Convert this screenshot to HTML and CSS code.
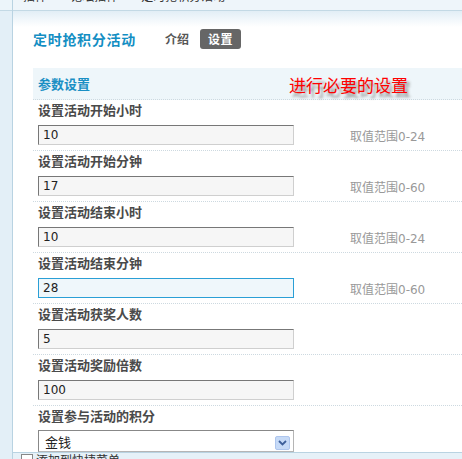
FILE: index.html
```html
<!DOCTYPE html>
<html lang="zh">
<head>
<meta charset="utf-8">
<title>定时抢积分活动 - 设置</title>
<link rel="stylesheet" href="styles.css">
</head>
<body>
<div class="frame">
  <div class="side">
    <div class="side-top"></div>
  </div>
  <div class="right">
    <div class="topbar">
      <div class="crumbs">插件 <span class="sep">»</span> 论坛插件 <span class="sep">»</span> 定时抢积分活动</div>
    </div>
    <div class="panel">
      <div class="title-row">
        <h1 class="title">定时抢积分活动</h1>
        <span class="tab">介绍</span>
        <span class="tab tab-active">设置</span>
      </div>
      <div class="section-head">参数设置</div>
      <div class="note">进行必要的设置</div>

      <div class="row">
        <div class="label">设置活动开始小时</div>
        <div class="field"><input class="input" type="text" value="10"><span class="hint">取值范围0-24</span></div>
      </div>
      <div class="row">
        <div class="label">设置活动开始分钟</div>
        <div class="field"><input class="input" type="text" value="17"><span class="hint">取值范围0-60</span></div>
      </div>
      <div class="row">
        <div class="label">设置活动结束小时</div>
        <div class="field"><input class="input" type="text" value="10"><span class="hint">取值范围0-24</span></div>
      </div>
      <div class="row">
        <div class="label">设置活动结束分钟</div>
        <div class="field"><input class="input input-focus" type="text" value="28"><span class="hint">取值范围0-60</span></div>
      </div>
      <div class="row">
        <div class="label">设置活动获奖人数</div>
        <div class="field"><input class="input" type="text" value="5"></div>
      </div>
      <div class="row">
        <div class="label">设置活动奖励倍数</div>
        <div class="field"><input class="input" type="text" value="100"></div>
      </div>
      <div class="row">
        <div class="label">设置参与活动的积分</div>
        <div class="field">
          <div class="select">
            <span class="select-text">金钱</span>
            <span class="select-btn"><svg width="9" height="6" viewBox="0 0 9 6"><path d="M1 1 L4.5 4.5 L8 1" fill="none" stroke="#3d5f9a" stroke-width="1.8"/></svg></span>
          </div>
        </div>
      </div>
    </div>
    <div class="bottom">
      <span class="check"></span><span class="bottom-text">添加到快捷菜单</span>
    </div>
  </div>
</div>
</body>
</html>
```

FILE: styles.css
```css
html, body {
  margin: 0;
  padding: 0;
}
body {
  width: 462px;
  height: 459px;
  overflow: hidden;
  background: #e6f1f8;
  font-family: "Noto Sans CJK SC", "DejaVu Sans", sans-serif;
  font-size: 12px;
  color: #333;
}
.frame {
  display: flex;
  height: 459px;
}
.side {
  width: 12px;
  flex: none;
  border-right: 1px solid #b9d3e2;
  background: #e3eff7;
}
.side-top {
  height: 10px;
  border-bottom: 1px solid #c3d9e5;
  background: #ecf5fa;
}
.right {
  flex: 1;
  display: flex;
  flex-direction: column;
  min-width: 0;
}
.topbar {
  height: 10px;
  flex: none;
  background: #eef5fa;
  border-bottom: 1px solid #c3d9e5;
  overflow: hidden;
  padding-left: 10px;
}
.crumbs {
  margin-top: -11px;
  line-height: 14px;
  font-size: 12px;
  color: #333;
  white-space: nowrap;
}
.sep {
  color: #999;
  margin: 0 6px;
}
.panel {
  position: relative;
  height: 442px;
  flex: none;
  overflow: hidden;
  background: linear-gradient(#e2eef6 0, #ffffff 16px, #ffffff 100%);
  border-bottom: 1px solid #b9d3e2;
  padding-left: 20px;
  box-sizing: border-box;
}
.title-row {
  display: flex;
  align-items: center;
  height: 20px;
  margin-top: 18px;
}
.title {
  margin: 0 29px 0 0;
  font-size: 14px;
  letter-spacing: 0.7px;
  font-weight: bold;
  color: #138ec3;
  line-height: 20px;
}
.tab {
  font-size: 12px;
  font-weight: bold;
  color: #555;
  line-height: 20px;
  margin-right: 11px;
}
.tab-active {
  background: #666;
  color: #fff;
  border-radius: 3px;
  padding: 0 8px;
  letter-spacing: 0.5px;
}
.section-head {
  margin-top: 19px;
  height: 31px;
  line-height: 31px;
  background: #eef6fa;
  border-bottom: 1px dotted #cdd9e0;
  padding-left: 5px;
  font-size: 13px;
  font-weight: bold;
  color: #1a8fc4;
}
.note {
  position: absolute;
  left: 276px;
  top: 62px;
  font-size: 17px;
  line-height: 24px;
  color: #ff0000;
  text-shadow: 3px 4px 3px #8a8a8a;
  white-space: nowrap;
}
.row {
  padding-left: 5px;
  border-bottom: 1px dotted #cdd9e0;
  height: 50px;
}
.label {
  height: 20px;
  line-height: 20px;
  font-size: 13px;
  font-weight: bold;
  color: #4a4a4a;
}
.field {
  display: flex;
  align-items: center;
  margin-top: 5px;
  height: 20px;
}
.input {
  width: 256px;
  height: 20px;
  box-sizing: border-box;
  margin: 0;
  padding: 0 0 0 4px;
  border: 1px solid;
  border-color: #777 #cfcfcf #cfcfcf #777;
  background: #f6f6f6;
  font-family: "DejaVu Sans", sans-serif;
  font-size: 12px;
  color: #222;
  outline: none;
}
.input-focus {
  border-color: #2a9fd6;
  background: #eff7fb;
}
.hint {
  margin-left: 56px;
  color: #999;
  font-family: "DejaVu Sans", "Noto Sans CJK SC", sans-serif;
  font-size: 12px;
  white-space: nowrap;
}
.select {
  width: 256px;
  height: 22px;
  box-sizing: border-box;
  border: 1px solid;
  border-color: #888 #b5b5b5 #b5b5b5 #888;
  background: #fff;
  display: flex;
  align-items: center;
  justify-content: space-between;
  padding: 0 3px 0 6px;
  flex: none;
}
.select-text {
  font-size: 13px;
  color: #222;
}
.select-btn {
  width: 15px;
  height: 14px;
  box-sizing: border-box;
  background: #c6daf7;
  border: 1px solid #aec6ee;
  border-radius: 2px;
  display: flex;
  align-items: center;
  justify-content: center;
  margin-top: 3px;
}
.bottom {
  display: flex;
  align-items: flex-start;
  padding-left: 8px;
  padding-top: 1px;
  overflow: hidden;
  height: 5px;
}
.check {
  width: 10px;
  height: 10px;
  border: 1px solid #888;
  background: #fff;
  margin-right: 3px;
}
.bottom-text {
  font-size: 12px;
  line-height: 14px;
  margin-top: -1px;
  color: #333;
}
```
